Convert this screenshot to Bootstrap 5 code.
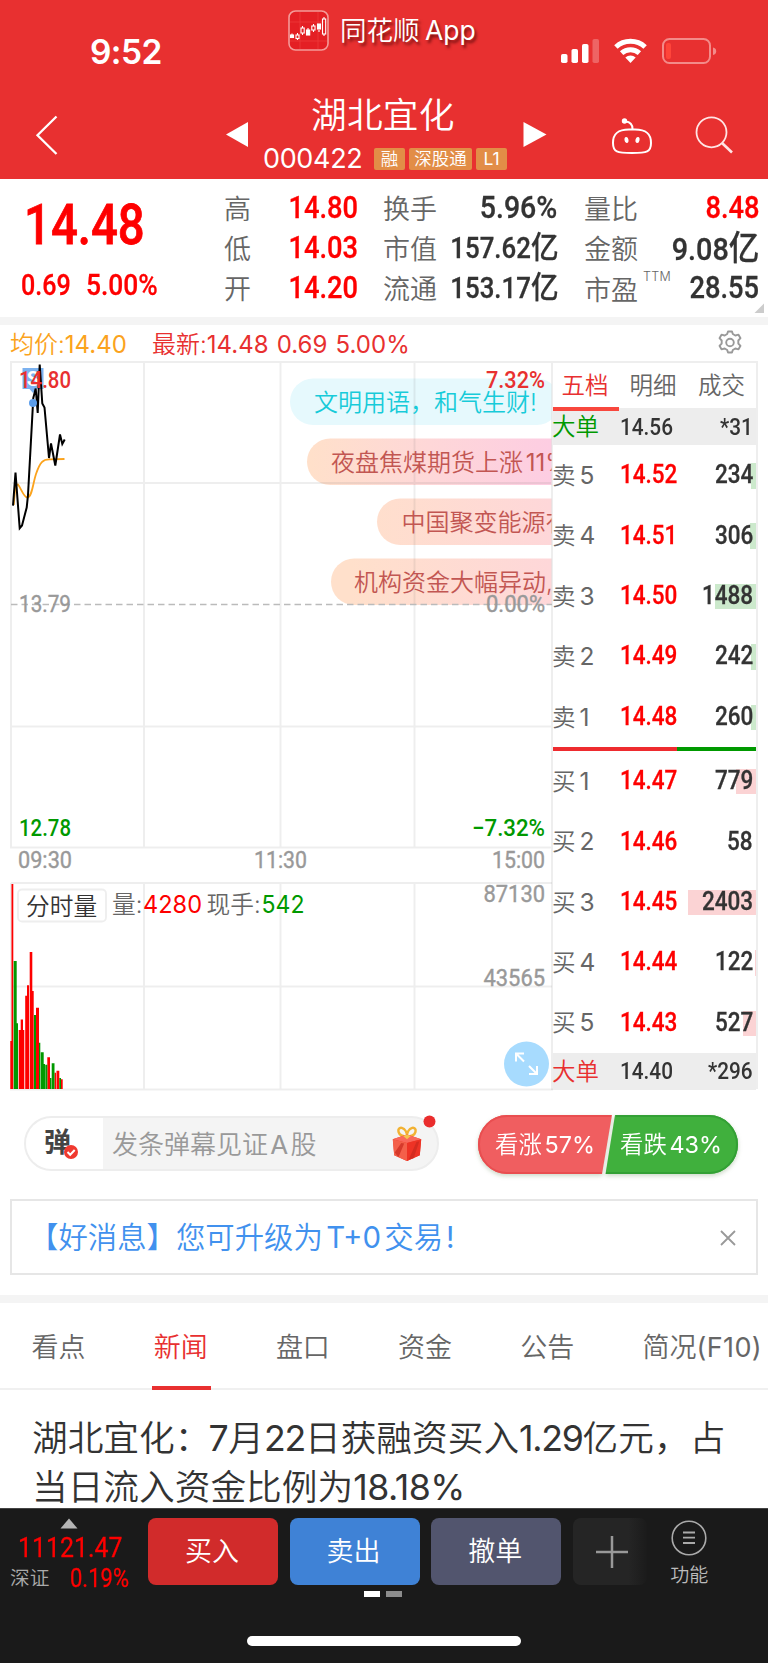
<!DOCTYPE html>
<html lang="zh-CN">
<head>
<meta charset="utf-8">
<meta name="viewport" content="width=device-width, initial-scale=1">
<title>湖北宜化 000422</title>
<link href="https://cdn.jsdelivr.net/npm/bootstrap@5.3.0/dist/css/bootstrap.min.css" rel="stylesheet">
<style>
  body{font-family:Inter,"Noto Sans CJK SC",sans-serif;font-weight:350;color:#333;line-height:1;width:768px;height:1663px;overflow:hidden;background:#fff}
  svg{display:block;flex:none}
  .lat{font-weight:400}
  .din{font-family:Roboto,"Noto Sans CJK SC",sans-serif;font-weight:500;display:inline-block;white-space:nowrap;transform:scaleX(.865);transform-origin:0 50%;-webkit-text-stroke:.3px currentColor}
  .din-end{transform-origin:100% 50%}
  .rise{color:#fe0000}.fall{color:#009900}.brand{color:#e83030}
  .top-area{height:179px;background:#e83030}
  .status-row{height:90px;padding-left:90px}
  .clock{font-size:33.5px;font-weight:600;width:198px;padding-top:36px;letter-spacing:-.6px}
  .app-name{font-size:26.5px;padding:17px 0 0 11px;width:232px;text-shadow:2px 3px 3px rgba(60,0,0,.65);word-spacing:-2px}
  .title-row{height:89px}
  .stock-name{font-size:35.7px;line-height:50px;height:50px;letter-spacing:.2px}
  .stock-code{font-size:27px;width:111px;letter-spacing:-.35px;margin-left:-1px;font-weight:400}
  .tag{background:#e28d47;border-radius:2px;height:22px;line-height:21px;font-size:17.5px;text-align:center}
  .quote{height:138px;display:grid;grid-template-columns:224px 134px 199px 202px;padding-top:9px}
  .quote .pair{height:39.7px;display:flex;justify-content:space-between;align-items:center;white-space:nowrap}
  .quote .pair>span:first-child{font-size:27px;color:#666;padding-top:4px}
  .quote .pair .din{font-size:31px;transform:scaleX(.88)}
  .quote .pair .din.pct{transform:scaleX(.92)}
  .quote .pair .din.amt{font-size:29px;transform:scaleX(.89)}
  .quote .pair .din.amt b{font-size:31px;font-weight:500;line-height:1}
  .quote .pair .din.amt-lg{font-size:32px;transform:scaleX(.9)}
  .quote .pair .din.amt-lg b{font-size:34px;font-weight:500;line-height:1}
  .big-price{font-size:55px;line-height:60px;transform:scaleX(.86);-webkit-text-stroke-width:.8px}
  .chg{font-size:29px}
  .band{height:8px;background:#f4f4f4}
  .legend-row{height:36px;font-size:24px;padding:4px 24px 0 10px}
  .legend-row .avg{color:#fba31d;width:142px;letter-spacing:0}
  .charts{width:553px;height:730px}
  .book{width:205px;border-right:2px solid #eee;border-top:2px solid #eee;height:728px}
  .book-tabs{height:45px;font-size:23.5px;color:#666}
  .book-tabs>div{height:48px;line-height:46px;text-align:center}
  .book-tabs .on{width:67px;border-bottom:4px solid #f8473d;color:#e83030;padding-right:2px;z-index:1}
  .brow{height:60.4px;display:flex;align-items:center;position:relative}
  .brow .lv{width:67px;color:#666;font-size:23.5px;white-space:nowrap;margin-left:-1px;margin-right:1px}
  .brow .lv b{font-weight:400;font-size:24.5px;margin-left:4px}
  .brow .lv.fall{color:#009900}.brow .lv.brand{color:#e83030}
  .brow .din{font-size:26px;margin-top:-2px}
  .brow .qty{margin-left:auto;margin-right:3px;position:relative}
  .brow .depth{position:absolute;right:0;top:18px;height:25.5px;background:#cce9cc}
  .brow.buy .depth{background:#fbd3d4}
  .brow.big-row{height:37px;background:#ededed}
  .brow.big-row .din{font-size:24px;margin-top:0;-webkit-text-stroke:0}
  .ratio{height:4px;background:#009900}.ratio div{height:4px;background:#ee2b2f}
  .comment-row{height:108px;padding:24px 30px 0 24px}
  .comment-box{width:415px;height:55px;border-radius:28px;border:2px solid #ededed;background:#f4f4f4;margin-top:1px}
  .comment-icon{width:77px;height:51px;background:#fff;border-radius:26px 0 0 26px;padding-left:18px}
  .comment-hint{font-size:26px;color:#999;padding:2px 0 0 9px;width:287px;white-space:nowrap;word-spacing:-5px}
  .votes{width:261px;height:60px;margin:-1px -1px 0 0}
  .notice{margin:0 10px;height:76px;border:2px solid #e6e6e6;font-size:29.4px;color:#4191ee;padding:1px 20px 0 17px;white-space:nowrap;word-spacing:-5px}
  .sections{height:87px;border-bottom:2px solid #f0f0f0;font-size:27px;color:#666;padding-left:31.5px}
  .sections>div{width:122.2px;height:87px;line-height:89px;flex:none;white-space:nowrap}
  .sections .on{color:#e83030;position:relative}
  .sections .on i{position:absolute;left:-2px;bottom:0;width:59px;height:4px;background:#e83030}
  .news{height:118px;padding:24px 20px 0 32px;font-size:35.7px;line-height:49px;overflow:hidden;white-space:nowrap}
  .news .en{letter-spacing:-1.3px;font-weight:400}
  .dock{height:155px;background:#1a1a1a;border-top:1px solid #444;color:#fff}
  .index-box{width:148px;padding:9px 0 0 10px}
  .act{height:67px;width:130px;border-radius:8px;margin-top:9px;margin-right:11.6px;font-size:27px;font-weight:350;color:#fff;padding:0 2px 0 0;border:0;line-height:67px}
  .home{width:274px;height:10px;border-radius:5px;background:#fff;margin:39px auto 0}
</style>
</head>
<body>
<header class="top-area text-white">
  <div class="status-row d-flex align-items-start">
    <div class="clock">9:52</div>
    <svg width="41" height="41" viewBox="0 0 41 41" style="margin-top:10px">
      <rect x="1" y="1" width="39" height="39" rx="6.5" fill="#e41f24" stroke="#f49a98" stroke-width="1.6"/>
      <path d="M12 2v37M30 2v37M2 12h37M2 31h37" stroke="#ec3b3b" stroke-width=".8"/>
      <g stroke="#fff" stroke-width="1.1" fill="none">
        <rect x="2.5" y="25" width="3" height="2.5" fill="#fff"/><path d="M4 23.5V25M9.500 23v2M9.500 28v2M14.500 16v2M14.500 23v2M20 18v2M25.500 14v2M25.500 20v2M31 20v2M36 7v2M36 24v2"/>
        <rect x="8" y="25" width="3" height="3.500"/><rect x="13" y="18" width="3.200" height="5"/><rect x="18.500" y="20" width="3.200" height="5" fill="#fff"/><rect x="23.800" y="16" width="3.200" height="4"/><rect x="29.500" y="14" width="3" height="5" fill="#fff"/><rect x="34.500" y="9" width="3.200" height="15"/>
      </g>
    </svg>
    <div class="app-name">同花顺 <span class="lat">App</span></div>
    <svg width="160" height="28" viewBox="0 0 160 28" style="margin-top:37px">
      <g fill="#fff"><rect x="0" y="17" width="6.500" height="9" rx="1.800"/><rect x="10.500" y="12" width="6.500" height="14" rx="1.800"/><rect x="21" y="7" width="6.500" height="19" rx="1.800"/><rect x="31.500" y="2" width="6.500" height="24" rx="1.800" opacity=".25"/></g>
      <g transform="translate(69.500 26)" fill="none" stroke="#fff" stroke-width="5"><path d="M-14.600-16A21.500 21.500 0 0 1 14.600-16"/><path d="M-8.900-9.900A13.300 13.300 0 0 1 8.900-9.900"/><path d="M0 0L-5.200-5.600A8 8 0 0 1 5.200-5.600Z" fill="#fff" stroke="none"/></g>
      <rect x="102" y="2" width="47" height="24" rx="6.500" fill="none" stroke="#f38b89" stroke-width="2"/><rect x="105" y="6" width="5" height="16" rx="2" fill="#ff453a"/><path d="M152 10.500a3.800 3.800 0 0 1 0 7.500z" fill="#f38b89"/>
    </svg>
  </div>
  <div class="title-row d-flex">
    <svg width="264" height="89" viewBox="0 90 264 89"><path d="M56.500 116.500L37.500 135.300L56.500 154" fill="none" stroke="#fff" stroke-width="2.300"/><path d="M226 134.500L248 122V147Z" fill="#fff"/></svg>
    <div style="width:245px">
      <div class="stock-name" style="padding-left:47px">湖北宜化</div>
      <div class="d-flex align-items-center" style="margin-top:5px"><div class="stock-code">000422</div><div class="tag" style="width:31px;margin-right:4px">融</div><div class="tag" style="width:63px;margin-right:4px">深股通</div><div class="tag lat" style="width:31px">L1</div></div>
    </div>
    <svg width="259" height="89" viewBox="509 90 259 89"><path d="M523.500 122V147L546.500 134.500Z" fill="#fff"/>
      <g fill="none" stroke="#fff" stroke-width="2"><path d="M629 129.500h6c12 0 16 5 16 13.500 0 9-4 10-19 10s-19-1-19-10c0-8.500 4-13.500 16-13.500z"/><path d="M632.500 129c0-4-1.500-7-7-7.500"/></g>
      <circle cx="624.500" cy="121" r="2.700" fill="#fff"/><ellipse cx="626.500" cy="140" rx="2" ry="3" fill="#fff" transform="rotate(-8 626.500 140)"/><ellipse cx="637.500" cy="140" rx="2" ry="3" fill="#fff" transform="rotate(12 637.500 140)"/>
      <circle cx="711.500" cy="132.300" r="15" fill="none" stroke="#ffe5e5" stroke-width="1.800"/><path d="M722 143l10 9.500" stroke="#ffe5e5" stroke-width="2.600"/></svg>
  </div>
</header>

<section class="quote position-relative">
  <div class="rise" style="padding:7px 0 0 24px">
    <div><span class="din big-price">14.48</span></div>
    <div style="margin:16px 0 0 -3px;white-space:nowrap"><span class="din chg" style="width:59px">0.69</span><span class="din chg" style="margin-left:6px;transform:scaleX(.91)">5.00%</span></div>
  </div>
  <div>
    <div class="pair"><span>高</span><span class="din din-end rise">14.80</span></div>
    <div class="pair"><span>低</span><span class="din din-end rise">14.03</span></div>
    <div class="pair"><span>开</span><span class="din din-end rise">14.20</span></div>
  </div>
  <div style="padding-left:25px">
    <div class="pair"><span>换手</span><span class="din din-end pct">5.96%</span></div>
    <div class="pair"><span>市值</span><span class="din din-end amt">157.62<b>亿</b></span></div>
    <div class="pair"><span>流通</span><span class="din din-end amt">153.17<b>亿</b></span></div>
  </div>
  <div style="padding-left:27px">
    <div class="pair"><span>量比</span><span class="din din-end rise">8.48</span></div>
    <div class="pair"><span>金额</span><span class="din din-end amt-lg">9.08<b>亿</b></span></div>
    <div class="pair"><span class="d-flex" style="padding-top:7px">市盈<small style="font-size:12.500px;letter-spacing:.3px;margin:-6px 0 0 5px">TTM</small></span><span class="din din-end">28.55</span></div>
  </div>
  <svg class="position-absolute bottom-0 end-0" width="14" height="14" viewBox="0 0 14 14"><path d="M10 .500V10H.500Z" fill="#ccc"/></svg>
</section>
<div class="band"></div>
<div class="legend-row d-flex align-items-center">
  <span class="avg">均价:<span class="lat">14.40</span></span><span class="brand">最新:<span class="lat" style="word-spacing:1.500px">14.48 0.69 5.00%</span></span>
  <svg class="ms-auto" width="28" height="28" viewBox="0 0 28 28" style="margin-top:-4px"><path d="M11.200 5L12 2.500h4L16.800 5l2.500 1.500 3.200-.8 2 3.500-2.200 2.300v3l2.200 2.300-2 3.500-3.200-.8-2.500 1.500-.8 2.500h-4l-.8-2.500-2.500-1.500-3.200.8-2-3.500 2.200-2.300v-3L3.500 9.200l2-3.500 3.200.8z" fill="none" stroke="#999" stroke-width="1.900" stroke-linejoin="round"/><circle cx="14" cy="13.500" r="3.800" fill="none" stroke="#999" stroke-width="1.900"/></svg>
</div>

<main class="d-flex">
  <svg class="charts" viewBox="0 361 553 730" style="font-family:Roboto,'Noto Sans CJK SC',sans-serif">
    <defs>
      <linearGradient id="pk" gradientUnits="userSpaceOnUse" x1="310" y1="0" x2="550" y2="0"><stop offset="0" stop-color="#ffe0ca"/><stop offset=".5" stop-color="#fed7d8"/><stop offset="1" stop-color="#fdcde2"/></linearGradient>
      <linearGradient id="or" gradientUnits="userSpaceOnUse" x1="350" y1="0" x2="550" y2="0"><stop offset="0" stop-color="#ffe0cb"/><stop offset="1" stop-color="#fed7d9"/></linearGradient>
      <clipPath id="plot"><rect x="10" y="361" width="541.500" height="730"/></clipPath>
    </defs>
    <g clip-path="url(#plot)">
    <rect x="290" y="378.500" width="270" height="46.500" rx="23.200" fill="#e6f9fd"/>
    <rect x="307" y="438.500" width="320" height="46.500" rx="23.200" fill="url(#pk)"/>
    <rect x="377" y="498.500" width="300" height="46.500" rx="23.200" fill="url(#or)"/>
    <rect x="331" y="558.500" width="320" height="46.500" rx="23.200" fill="url(#or)"/>
    </g>
    <g stroke="#777" stroke-opacity=".12" stroke-width="2" fill="none">
      <path d="M10 362H553M11 362V848M10 847.500H553M144 362V847M280.500 362V847M414.500 362V847M552 362V1090M11 483H552M11 726.500H552"/>
      <path d="M11 883H552M11 883V1089M10 1089.500H553M144 883V1089M280.500 883V1089M414.500 883V1089M11 986.500H552"/>
    </g>
    <path d="M11 604.500H552" stroke="#bbb" stroke-width="1.500" stroke-dasharray="6.500 4"/>
    <g clip-path="url(#plot)" style="font-family:Inter,'Noto Sans CJK SC',sans-serif;word-spacing:-4px" font-size="24" fill="#c25652">
      <text x="314" y="411" fill="#17cbd9">文明用语，和气生财!</text>
      <text x="331" y="471">夜盘焦煤期货上涨 <tspan class="lat">11%</tspan></text>
      <text x="401.500" y="531">中国聚变能源有</text>
      <text x="354" y="591">机构资金大幅异动,</text>
    </g>
    <path d="M13.700 505L15.500 485L18 484.500C21 488 24 498 27.500 497.500C32 497 33 483 36 474C40 462 43 459 50 459.300L64.500 459" fill="none" stroke="#fba31d" stroke-width="1.800"/>
    <path d="M22.500 368h21v21h-7l-3.500 4-3.500-4h-7z" fill="#5a9deb" fill-opacity=".8"/><text x="33" y="386" font-size="20" font-weight="700" fill="#fff" text-anchor="middle">S</text>
    <path d="M13 505.700L15.500 472.500L19.700 528.300L22 525.500L25 514L26.700 507.500L28 495L33.300 398L35.700 388.500L37.700 413L39.700 364.500L42.300 403.500L44.500 407.500L49 458L51 443.500L55.300 465.500L60 434.500L62.300 444L64.700 439.500" fill="none" stroke="#000" stroke-width="2"/>
    <circle cx="33" cy="403" r="4" fill="#5a9deb"/>
    <g font-size="24" font-weight="500">
      <g fill="#e83030"><text x="19" y="388" textLength="52" lengthAdjust="spacingAndGlyphs">14.80</text><text x="486" y="388" textLength="59" lengthAdjust="spacingAndGlyphs">7.32%</text></g>
      <g fill="#999" stroke="#999" stroke-width=".4" font-weight="400"><text x="19" y="612" textLength="52" lengthAdjust="spacingAndGlyphs">13.79</text><text x="486" y="612" textLength="59" lengthAdjust="spacingAndGlyphs">0.00%</text>
        <text x="18" y="868" textLength="54" lengthAdjust="spacingAndGlyphs">09:30</text><text x="254" y="868" textLength="53" lengthAdjust="spacingAndGlyphs">11:30</text><text x="492" y="868" textLength="53" lengthAdjust="spacingAndGlyphs">15:00</text>
        <text x="483.500" y="902" textLength="61.500" lengthAdjust="spacingAndGlyphs">87130</text><text x="483.500" y="986" textLength="61.500" lengthAdjust="spacingAndGlyphs">43565</text></g>
      <g fill="#009900"><text x="19" y="836" textLength="52" lengthAdjust="spacingAndGlyphs">12.78</text><text x="472" y="836" textLength="73" lengthAdjust="spacingAndGlyphs">−7.32%</text></g>
    </g>
    <g fill="#fe0000">
      <path d="M10.300 1089V1041H11.500V884H13.300V1089ZM18.700 1089V1030H20.700V1019.500H23V1030H24.300V1089ZM25.200 1089V995.700H27V985.300H29V1089ZM29.700 1089V952H32.300V991H33.700V1089ZM36 1089V1007.700H39V1089ZM47.300 1089V1057.300H50V1089ZM54.500 1089V1072.700H56V1089ZM56.500 1089V1070.700H59.300V1089ZM61 1089V1079.300H62.700V1089Z"/>
      <path fill="#009900" d="M13.700 1089V961H16.700V1023.300H18V1089ZM34 1089V1015H36V1089ZM39 1089V1042.700H40.300V1089ZM40.800 1089V1052.300H43.700V1064H45V1089ZM45.300 1089V1064.700H47.300V1089ZM50 1089V1078H51.300V1089ZM51.700 1089V1063.300H54.500V1089ZM59.300 1089V1078H61V1089Z"/>
    </g>
    <rect x="18" y="889.500" width="88" height="32" rx="4" fill="#fff" stroke="#eee" stroke-width="1.800"/>
    <g style="font-family:Inter,'Noto Sans CJK SC',sans-serif" font-size="23.700"><text x="26" y="915" fill="#333">分时量</text>
      <text x="112" y="913" fill="#666">量:</text><text class="lat" x="143" y="913" fill="#fe0000" textLength="59" lengthAdjust="spacingAndGlyphs">4280</text><text x="206.500" y="913" fill="#666">现手:</text><text class="lat" x="261.500" y="913" fill="#009900" textLength="43" lengthAdjust="spacingAndGlyphs">542</text></g>
    <circle cx="526.500" cy="1064" r="22.500" fill="#a7dbfe"/><path d="M524 1061.500l-8-8m0 8v-8h8M529 1066l8 8m0-8v8h-8" fill="none" stroke="#fff" stroke-width="2"/>
  </svg>

  <section class="book">
    <div class="book-tabs d-flex"><div class="on">五档</div><div style="width:69px">明细</div><div style="width:70px">成交</div></div>
    <div class="brow big-row"><span class="lv fall">大单</span><span class="din">14.56</span><span class="din din-end qty">*31</span></div>
    <div class="brow"><i class="depth" style="width:5px"></i><span class="lv">卖<b>5</b></span><span class="din rise">14.52</span><span class="din din-end qty">234</span></div>
    <div class="brow"><i class="depth" style="width:6.500px"></i><span class="lv">卖<b>4</b></span><span class="din rise">14.51</span><span class="din din-end qty">306</span></div>
    <div class="brow"><i class="depth" style="width:41.500px"></i><span class="lv">卖<b>3</b></span><span class="din rise">14.50</span><span class="din din-end qty">1488</span></div>
    <div class="brow"><i class="depth" style="width:5px"></i><span class="lv">卖<b>2</b></span><span class="din rise">14.49</span><span class="din din-end qty">242</span></div>
    <div class="brow"><i class="depth" style="width:5px"></i><span class="lv">卖<b>1</b></span><span class="din rise">14.48</span><span class="din din-end qty">260</span></div>
    <div class="ratio"><div style="width:61%"></div></div>
    <div class="brow buy"><i class="depth" style="width:20.500px"></i><span class="lv">买<b>1</b></span><span class="din rise">14.47</span><span class="din din-end qty">779</span></div>
    <div class="brow buy"><span class="lv">买<b>2</b></span><span class="din rise">14.46</span><span class="din din-end qty">58</span></div>
    <div class="brow buy"><i class="depth" style="width:68px"></i><span class="lv">买<b>3</b></span><span class="din rise">14.45</span><span class="din din-end qty">2403</span></div>
    <div class="brow buy"><i class="depth" style="width:1px"></i><span class="lv">买<b>4</b></span><span class="din rise">14.44</span><span class="din din-end qty">122</span></div>
    <div class="brow buy"><i class="depth" style="width:13px"></i><span class="lv">买<b>5</b></span><span class="din rise">14.43</span><span class="din din-end qty">527</span></div>
    <div class="brow big-row"><span class="lv brand">大单</span><span class="din">14.40</span><span class="din din-end qty">*296</span></div>
  </section>
</main>

<section class="comment-row d-flex justify-content-between align-items-start">
  <div class="comment-box d-flex align-items-center position-relative">
    <div class="comment-icon d-flex align-items-center position-relative"><span style="font-size:27px;font-weight:700;margin-top:-3px;color:#444">弹</span>
      <svg class="position-absolute" style="left:37px;top:26px" width="16" height="16" viewBox="0 0 16 16"><circle cx="8" cy="8" r="7" fill="#f0392f"/><path d="M4.500 8l2.700 2.700 4.500-4.700" fill="none" stroke="#fff" stroke-width="2"/></svg></div>
    <div class="comment-hint">发条弹幕见证 <span class="lat">A</span> 股</div>
    <svg width="34" height="36" viewBox="0 0 34 38" style="margin-top:0">
      <path d="M17 11C6 11 6 1 11.500 2C15 3 17 7 17 11C17 7 19 3 22.500 2C28 1 28 11 17 11Z" fill="none" stroke="#f2b233" stroke-width="2.600"/>
      <path d="M2 14L17 9L32 14L30.500 31L17 37L3.500 31Z" fill="#ea3b28"/><path d="M2 14L17 9L32 14L17 18Z" fill="#f9685c"/><path d="M17 18V37L30.500 31L32 14Z" fill="#ee3325"/><path d="M2 14L17 18V37L3.500 31Z" fill="#f4604a"/><path d="M4 28L11 18L14 18.500L8 33ZM19 35L27 17L30 16L24 34Z" fill="#c92a1e" opacity=".7"/><path d="M13 10.500L17 9L21 10.500L17 14Z" fill="#f6c34d"/>
    </svg>
    <svg class="position-absolute" style="left:397px;top:-3px" width="13" height="13" viewBox="0 0 13 13"><circle cx="6.500" cy="6.500" r="6" fill="#ea2d2d"/></svg>
  </div>
  <svg class="votes" viewBox="478 1113 261 60" style="overflow:visible;filter:drop-shadow(0 2px 2px rgba(80,120,60,.28))">
    <path d="M507 1114H612L602 1173H507A29 29.500 0 0 1 507 1114Z" fill="#f05e60"/>
    <path d="M615 1114H709A29 29.500 0 0 1 709 1173H605.500Z" fill="#40b03d"/>
    <path d="M507 1115H611M602 1172H507A28 28.500 0 0 1 507 1115" fill="none" stroke="#e94e50" stroke-width="2"/><path d="M616 1115H709A28 28.500 0 0 1 709 1172H606" fill="none" stroke="#33a035" stroke-width="2"/>
    <g font-size="23.500" fill="#fff" style="word-spacing:-4px"><text x="495" y="1152" textLength="100" lengthAdjust="spacingAndGlyphs">看涨 <tspan class="lat">57%</tspan></text><text x="620" y="1152" textLength="102" lengthAdjust="spacingAndGlyphs">看跌 <tspan class="lat">43%</tspan></text></g>
  </svg>
</section>

<div class="notice d-flex align-items-center justify-content-between"><span>【好消息】您可升级为 <span class="lat">T+0</span> 交易<span class="lat" style="margin-left:3px">!</span></span>
  <svg width="16" height="16" viewBox="0 0 16 16"><path d="M1 1l14 14M15 1L1 15" stroke="#999" stroke-width="1.800"/></svg></div>
<div class="band" style="margin-top:20px"></div>
<nav class="sections d-flex"><div>看点</div><div class="on">新闻<i></i></div><div>盘口</div><div>资金</div><div>公告</div><div>简况<span class="lat" style="letter-spacing:.4px">(F10)</span></div></nav>
<article class="news">湖北宜化：<span class="en" style="margin-left:-2px;margin-right:1px">7</span>月<span class="en">22</span>日获融资买入<span class="en">1.29</span>亿元，占<br>当日流入资金比例为<span class="lat" style="letter-spacing:-.5px">18.18%</span></article>

<footer class="dock">
  <div class="d-flex" style="height:77px">
    <div class="index-box">
      <svg width="18" height="11" viewBox="0 0 18 11" style="margin-left:50px"><path d="M9 .500L17.500 10.500H.500Z" fill="#b5b5b5"/></svg>
      <div style="padding:5px 0 0 8px"><span class="din rise" style="font-size:28px;transform:scaleX(.89);font-weight:400">11121.47</span></div>
      <div class="d-flex align-items-center" style="margin-top:5px"><span style="font-size:19.700px;color:#aaa;width:60px">深证</span><span class="din rise" style="font-size:25px;font-weight:400;transform:scaleX(.88);margin-top:-1px">0.19%</span></div>
    </div>
    <button class="btn act" style="background:#d12b2b">买入</button>
    <button class="btn act" style="background:#3f82d6">卖出</button>
    <button class="btn act" style="background:#52556e">撤单</button>
    <div class="act d-flex justify-content-center align-items-center" style="width:74px;padding-left:6px;background:linear-gradient(90deg,#252525 75%,#1b1b1b)"><svg width="34" height="34" viewBox="0 0 34 34"><path d="M17 1v32M1 17h32" stroke="#999" stroke-width="2.500"/></svg></div>
    <div class="text-center" style="width:62px;padding-top:11px"><svg class="mx-auto" width="36" height="36" viewBox="0 0 36 36" fill="none" stroke="#aaa"><circle cx="18" cy="18" r="16.800" stroke-width="1.600"/><path d="M12 12.500h12M12 17.700h12M12 23h12" stroke-width="1.800"/></svg><div style="font-size:19px;color:#bbb;margin-top:10px">功能</div></div>
  </div>
  <div class="d-flex justify-content-center" style="gap:6px;padding-top:5px;margin-left:-2px"><div style="width:16px;height:6px;background:#fff"></div><div style="width:16px;height:6px;background:#8c8c8c"></div></div>
  <div class="home"></div>
</footer>
<script src="https://cdn.jsdelivr.net/npm/bootstrap@5.3.0/dist/js/bootstrap.bundle.min.js"></script>
</body>
</html>
